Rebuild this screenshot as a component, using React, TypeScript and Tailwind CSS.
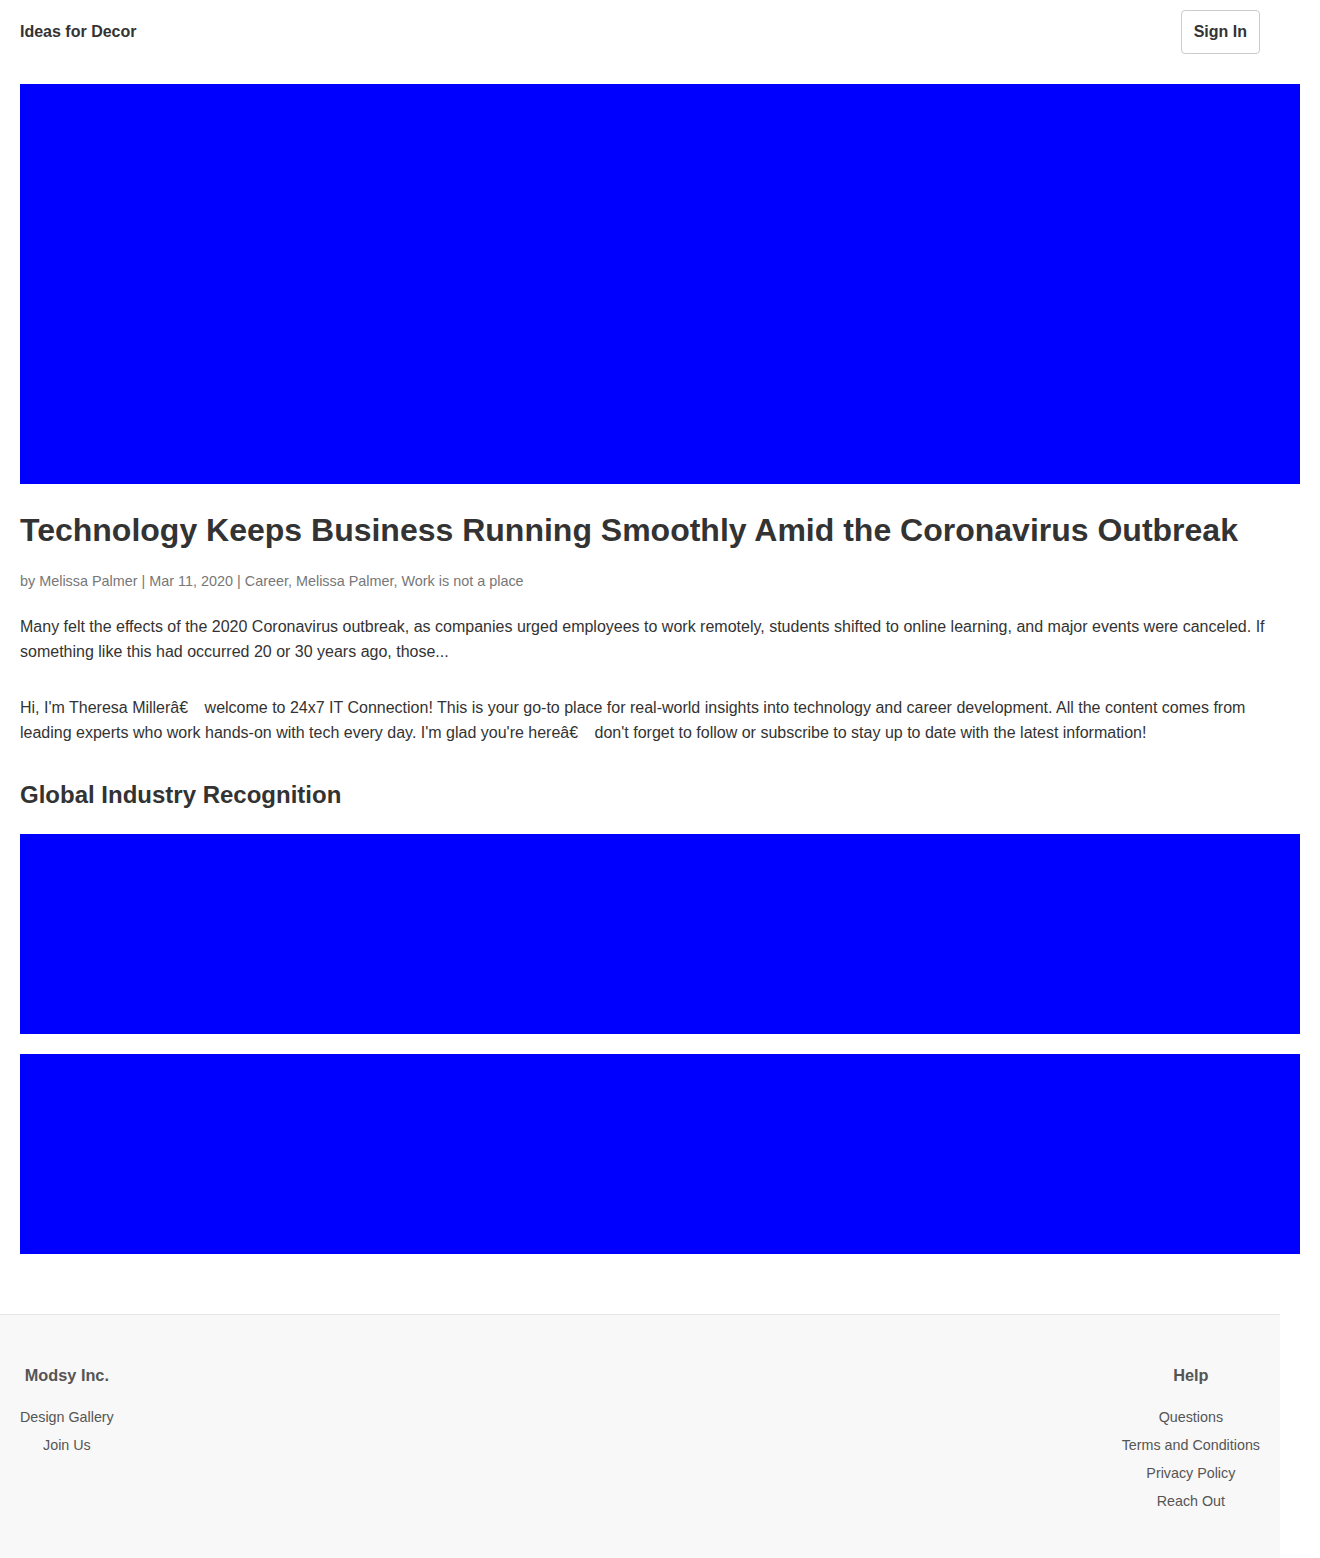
import React from "react";

const font = { fontFamily: '"Liberation Sans", Arial, sans-serif' };

const Block = ({ h }: { h: string }) => <div className={`w-full bg-[#0000ff] ${h}`} />;

// the stray byte of the broken dash shows as a blank gap
const Gap = () => <span className="inline-block w-[12px]" />;

const FooterCol = ({ title, links }: { title: string; links: string[] }) => (
  <div className="flex flex-col items-center text-center">
    <h4 className="text-[16.3px] font-bold leading-[20px] text-[#555]">{title}</h4>
    <ul className="mt-[24px] flex flex-col gap-[12px]">
      {links.map((l) => (
        <li key={l} className="text-[14.3px] leading-[16px] text-[#555]">
          {l}
        </li>
      ))}
    </ul>
  </div>
);

export default function App() {
  return (
    <div className="min-h-[1558px] w-[1320px] bg-white text-[#333]" style={font}>
      <header className="flex h-[64px] items-center justify-between pl-[20px] pr-[60px]">
        <span className="text-[16px] font-bold leading-[20px] text-[#333]">Ideas for Decor</span>
        <button className="h-[44px] rounded-[4px] border border-[#ccc] px-[12px] text-[16px] font-bold text-[#333]">
          Sign In
        </button>
      </header>

      <main className="px-[20px] pt-[20px] pb-[60px]">
        <Block h="h-[400px]" />
        <h1 className="mt-[27px] text-[32px] font-bold leading-[38px] whitespace-nowrap text-[#333]">
          Technology Keeps Business Running Smoothly Amid the Coronavirus Outbreak
        </h1>
        <p className="mt-[23px] text-[14.4px] leading-[18px] text-[#777]">
          by Melissa Palmer | Mar 11, 2020 | Career, Melissa Palmer, Work is not a place
        </p>
        <p className="mt-[24px] text-[16px] leading-[25px] text-[#333]">
          Many felt the effects of the 2020 Coronavirus outbreak, as companies urged employees to work remotely,
          students shifted to online learning, and major events were canceled. If something like this had occurred 20
          or 30 years ago, those...
        </p>
        <p className="mt-[31px] text-[16px] leading-[25px] text-[#333]">
          Hi, I'm Theresa Millerâ€
          <Gap /> welcome to 24x7 IT Connection! This is your go-to place for real-world insights into technology and
          career development. All the content comes from leading experts who work hands-on with tech every day. I'm
          glad you're hereâ€
          <Gap /> don't forget to follow or subscribe to stay up to date with the latest information!
        </p>
        <h2 className="mt-[35px] text-[24px] font-bold leading-[29px] text-[#333]">Global Industry Recognition</h2>
        <div className="mt-[25px] flex flex-col gap-[20px]">
          <Block h="h-[200px]" />
          <Block h="h-[200px]" />
        </div>
      </main>

      <footer className="flex h-[244px] w-[1280px] items-start justify-between border-t border-[#e6e6e6] bg-[#f8f8f8] px-[20px] pt-[50px]">
        <FooterCol title="Modsy Inc." links={["Design Gallery", "Join Us"]} />
        <FooterCol title="Help" links={["Questions", "Terms and Conditions", "Privacy Policy", "Reach Out"]} />
      </footer>
    </div>
  );
}
